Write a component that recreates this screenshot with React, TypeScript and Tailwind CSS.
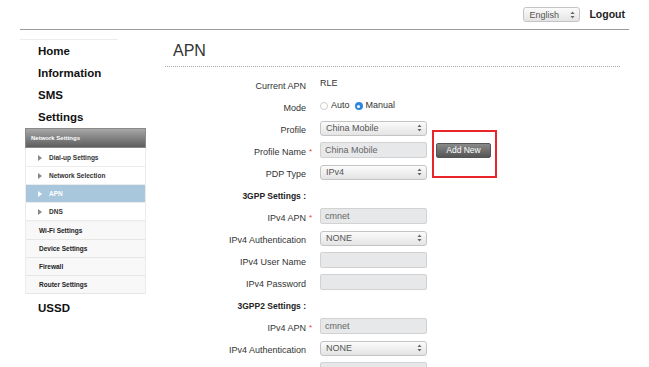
import React from 'react'

const font = { fontFamily: '"Liberation Sans", Arial, sans-serif' }

function Arrows() {
  return (
    <svg width="5" height="8" viewBox="0 0 5 8" className="shrink-0">
      <path d="M2.5 0.5 L4.5 3 H0.5 Z" fill="#666" />
      <path d="M2.5 7.5 L4.5 5 H0.5 Z" fill="#666" />
    </svg>
  )
}

function Select({ value, w = 'w-[107px]' }: { value: string; w?: string }) {
  return (
    <div
      className={`${w} h-[15px] flex items-center justify-between pl-[5px] pr-[4px] rounded-[3px] border border-[#c4c4c4] bg-gradient-to-b from-[#fbfbfb] to-[#e4e4e4] text-[9px] leading-none text-[#555]`}
    >
      <span className="pt-px">{value}</span>
      <Arrows />
    </div>
  )
}

function Input({ value = '' }: { value?: string }) {
  return (
    <div className="w-[107px] h-[16px] flex items-center pl-[4px] pt-px rounded-[2px] border border-[#d2d2d2] bg-[#e7e8e9] text-[9px] leading-none text-[#666]">
      {value}
    </div>
  )
}

function Row({ label, req, heading, children }: { label: string; req?: boolean; heading?: boolean; children?: React.ReactNode }) {
  return (
    <div className="flex h-[22px] items-center">
      <div className="w-[141px] text-right">
        <span className={`relative ${heading ? 'font-bold text-[8.5px] text-[#222]' : 'text-[9px] text-[#333]'}`}>
          {label}
          {req && <span className="absolute -right-[6px] -top-[1px] text-[#e33] text-[8px]">*</span>}
        </span>
      </div>
      <div className="ml-[14px] flex items-center">{children}</div>
    </div>
  )
}

function SubItem({ label, active }: { label: string; active?: boolean }) {
  return (
    <div className={`h-[18px] flex items-center pl-[12px] border-b border-[#ececec] ${active ? 'bg-[#a8c6dc]' : 'bg-white'}`}>
      <svg width="4" height="6" viewBox="0 0 4 6" className="mr-[7px]">
        <path d="M0 0 L4 3 L0 6 Z" fill={active ? '#fff' : '#888'} />
      </svg>
      <span className={`font-bold text-[6.5px] ${active ? 'text-white' : 'text-[#333]'}`}>{label}</span>
    </div>
  )
}

function GroupItem({ label }: { label: string }) {
  return (
    <div className="h-[18px] flex items-center pl-[13px] bg-[#f8f8f8] border-b border-[#e6e6e6]">
      <span className="font-bold text-[6.5px] text-[#222]">{label}</span>
    </div>
  )
}

export default function App() {
  return (
    <div className="w-[649px] h-[367px] overflow-hidden bg-white" style={font}>
      {/* top bar */}
      <div className="mx-[20px] h-[30px] border-b border-[#9a9a9a] flex justify-end pt-[7px] pr-[4px]">
        <Select value="English" w="w-[57px]" />
        <span className="ml-[9px] text-[10.5px] font-bold text-[#222] leading-[14px]">Logout</span>
      </div>

      <div className="flex">
        {/* sidebar */}
        <div className="ml-[20px] w-[126px]">
          <div className="mt-[9px] w-[98px] h-px bg-[#ececec]" />
          <div className="ml-[5px] w-[121px]">
            {['Home', 'Information', 'SMS', 'Settings'].map((t) => (
              <div key={t} className="h-[22px] flex items-center pl-[13px] pt-[2px] text-[11.5px] font-bold text-[#111]">
                {t}
              </div>
            ))}
            <div className="h-[20px] flex items-center pl-[5px] bg-gradient-to-b from-[#a8a8a8] to-[#5e5e5e] border border-[#8a8a8a]">
              <span className="font-bold text-[6px] text-white">Network Settings</span>
            </div>
            <div className="border-x border-[#ececec] pt-px">
              <SubItem label="Dial-up Settings" />
              <SubItem label="Network Selection" />
              <SubItem label="APN" active />
              <SubItem label="DNS" />
              <div className="h-px bg-[#f2f2f2]" />
              <GroupItem label="Wi-Fi Settings" />
              <GroupItem label="Device Settings" />
              <GroupItem label="Firewall" />
              <GroupItem label="Router Settings" />
            </div>
            <div className="h-[26px] flex items-center pl-[13px] pt-[4px] text-[11.5px] font-bold text-[#111]">USSD</div>
          </div>
        </div>

        {/* main */}
        <div className="ml-[19px] w-[455px]">
          <div className="h-[37px] pt-[13px] pl-[8px] border-b border-dotted border-[#aaa]">
            <div className="text-[16px] leading-[16px] text-[#333]">APN</div>
          </div>
          <div className="mt-[6px]">
            <Row label="Current APN">
              <span className="text-[9px] text-[#333]">RLE</span>
            </Row>
            <Row label="Mode">
              <div className="flex items-center text-[9px] text-[#333]">
                <span className="w-[8px] h-[8px] rounded-full border border-[#ccc] bg-white mr-[3px]" />
                <span>Auto</span>
                <span className="ml-[5px] w-[8px] h-[8px] rounded-full bg-[#2f86e0] flex items-center justify-center mr-[3px]">
                  <span className="w-[3px] h-[3px] rounded-full bg-white" />
                </span>
                <span>Manual</span>
              </div>
            </Row>
            <Row label="Profile">
              <Select value="China Mobile" />
            </Row>
            <Row label="Profile Name" req>
              <Input value="China Mobile" />
              <div className="relative ml-[9px]">
                <div className="w-[55px] h-[15px] rounded-[2px] bg-gradient-to-b from-[#8a8a8a] to-[#555] border border-[#555] flex items-center justify-center text-[8.5px] text-white">
                  Add New
                </div>
                <div className="absolute -left-[4px] -top-[13px] w-[65px] h-[48px] border-2 border-[#e8262a]" />
              </div>
            </Row>
            <Row label="PDP Type">
              <Select value="IPv4" />
            </Row>
            <Row label="3GPP Settings :" heading />
            <Row label="IPv4 APN" req>
              <Input value="cmnet" />
            </Row>
            <Row label="IPv4 Authentication">
              <Select value="NONE" />
            </Row>
            <Row label="IPv4 User Name">
              <Input />
            </Row>
            <Row label="IPv4 Password">
              <Input />
            </Row>
            <Row label="3GPP2 Settings :" heading />
            <Row label="IPv4 APN" req>
              <Input value="cmnet" />
            </Row>
            <Row label="IPv4 Authentication">
              <Select value="NONE" />
            </Row>
            <Row label="">
              <Input />
            </Row>
          </div>
        </div>
      </div>
    </div>
  )
}
